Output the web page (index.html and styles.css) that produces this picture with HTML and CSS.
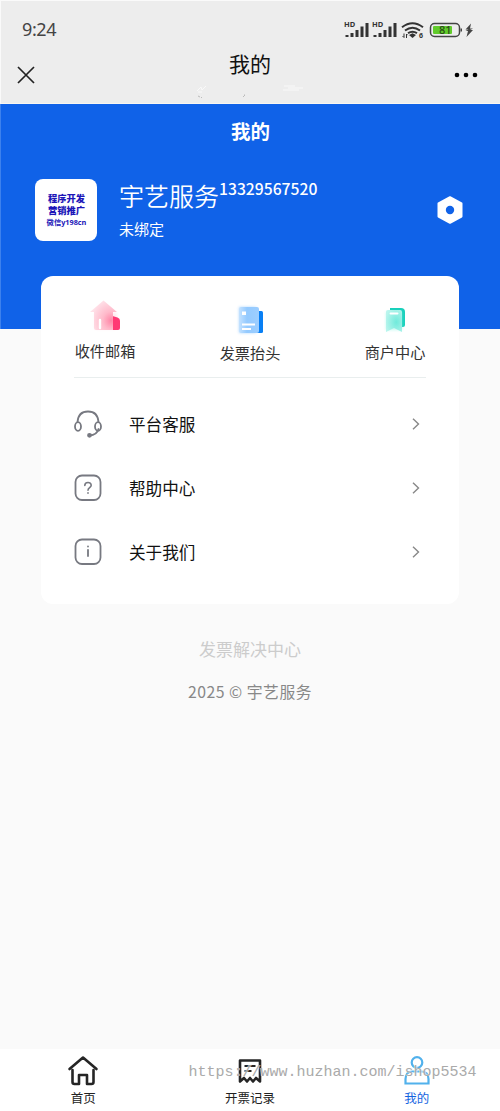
FILE: index.html
```html
<!DOCTYPE html>
<html lang="zh-CN">
<head>
<meta charset="utf-8">
<title>我的</title>
<link rel="stylesheet" href="styles.css">
</head>
<body>
<div class="screen">
  <header class="system">
    <div class="status">
      <span class="time">9:24</span>
      <svg class="status-icons" width="132" height="20" viewBox="0 0 132 20">
        <g fill="#333">
          <text x="0" y="7" class="hd">HD</text>
          <path d="M1.500 15h3v2h-3zM6.500 13h3v4h-3zM11.500 10h3v7h-3zM16.500 6.500h3V17h-3zM21.500 3h3v14h-3z"/>
          <text x="28" y="7" class="hd">HD</text>
          <path d="M29.500 15h3v2h-3zM34.500 13h3v4h-3zM39.500 10h3v7h-3zM44.500 6.500h3V17h-3zM49.500 3h3v14h-3z"/>
          <path d="M65 15l3.500-1.700L72 15l-3.500 3z"/>
          <text x="75" y="18" class="six">6</text>
        </g>
        <path d="M58 7.200q10.500-8 21 0M61 10.500q7.500-5.500 15 0M64 13.200q4.500-2.800 9 0" fill="none" stroke="#333" stroke-width="2"/>
        <path d="M60 13.500v4l-1.500-1.500M62.500 18v-4l1.200 1.200" fill="none" stroke="#333" stroke-width="1"/>
        <rect x="86.500" y="3.500" width="29" height="13" rx="4" fill="none" stroke="#444" stroke-width="1.500"/>
        <rect x="89" y="6" width="19" height="8" rx="1" fill="#61cb2b"/>
        <path d="M116.500 8.500h1.500v3h-1.500z" fill="#444"/>
        <text x="95" y="14" class="level">81</text>
        <path d="M127 3.500l-5.500 6h3l-3 1.500h2.500l-1.500 6 6.500-7h-3l3-1.500h-3z" fill="#444"/>
      </svg>
    </div>
    <div class="nav">
      <svg width="18" height="18" viewBox="0 0 18 18"><path d="M1 1l16 16M17 1L1 17" stroke="#222" stroke-width="1.700"/></svg>
      <h1>我的</h1>
      <svg width="24" height="6" viewBox="0 0 24 6"><circle cx="3" cy="3" r="2.300"/><circle cx="12" cy="3" r="2.300"/><circle cx="21" cy="3" r="2.300"/></svg>
    </div>
    <svg class="specks" width="108" height="15" viewBox="0 0 108 15" fill="none"><path d="M1 7l4-4 1 3 4-4M2 8h4M88 2h11M92 4h15M87 6h16" stroke="#f9f9f9"/><path d="M2 12l2 1M5 13l1 1M47 13l2-2M48 11h1" stroke="#bbb"/></svg>
  </header>

  <section class="hero">
    <h2>我的</h2>
    <div class="profile">
      <div class="avatar"><b>程序开发</b><b>营销推广</b><b class="wechat">微信y198cn</b></div>
      <div class="who">
        <div class="name">宇艺服务<span class="phone">13329567520</span></div>
        <div class="bind">未绑定</div>
      </div>
      <svg class="settings" width="28" height="30" viewBox="0 0 28 30"><path d="M14 2.200L25.500 8.500v13L14 27.800 2.500 21.500v-13z" fill="#fff" stroke="#fff" stroke-width="2" stroke-linejoin="round"/><circle cx="14" cy="15" r="4.200" fill="#1062e8"/></svg>
    </div>
  </section>

  <main class="card">
    <div class="quick">
      <div class="quick-item mail">
        <svg width="36" height="36" viewBox="0 0 36 36">
          <defs><radialGradient id="pink" cx=".78" cy=".68" r=".75"><stop offset="0" stop-color="#ff86a7"/><stop offset=".4" stop-color="#ffb9ca"/><stop offset="1" stop-color="#ffe2e9"/></radialGradient><filter id="soft" x="-30%" y="-30%" width="160%" height="160%"><feGaussianBlur stdDeviation="1.800"/></filter></defs>
          <path d="M7 15h22v16H7z" fill="#ffdce5" filter="url(#soft)" opacity=".6"/>
          <path d="M24.500 18l5 1.500q2.500 1 2.500 3V30q0 2-2 2h-5.500z" fill="#ff3974"/>
          <path d="M15.500 2.500L29 14h-4v18H8q-2 0-2-2V14H2z" fill="url(#pink)"/>
          <path d="M12 22v8" stroke="#fff" stroke-width="2.400" stroke-linecap="round"/>
        </svg><span>收件邮箱</span>
      </div>
      <div class="quick-item title">
        <svg width="32" height="36" viewBox="0 0 32 36">
          <defs><linearGradient id="blue"><stop offset="0" stop-color="#c4e2ff"/><stop offset=".4" stop-color="#94caff"/><stop offset="1" stop-color="#9dceff"/></linearGradient></defs>
          <path d="M5 6h17v26H5z" fill="#8bc6ff" filter="url(#soft)" opacity=".65"/>
          <rect x="21" y="10" width="8" height="22" rx="1.500" fill="#087ff4"/>
          <rect x="5" y="6" width="20" height="26" rx="2" fill="url(#blue)"/>
          <path d="M8 23.500h13M8 28h9" stroke="#fff" stroke-width="2"/><path d="M8 10.500h4v3.500H8z" fill="#fff"/>
        </svg><span>发票抬头</span>
      </div>
      <div class="quick-item merchant">
        <svg width="30" height="32" viewBox="0 0 30 32">
          <defs><radialGradient id="green" cx=".65" cy=".55" r=".7"><stop offset="0" stop-color="#70eadb"/><stop offset="1" stop-color="#b9f5ed"/></radialGradient></defs>
          <path d="M10 4h11q4 0 4 4v13q0 2-2 2H10z" fill="#18d0bb"/>
          <path d="M6 8h16v18H6z" fill="#8df0e3" filter="url(#soft)" opacity=".5"/>
          <path d="M8 6h12q2 0 2 2v20l-8-4-8 4V8q0-2 2-2z" fill="url(#green)"/>
          <path d="M10.500 9.500h7" stroke="#fff" stroke-width="2" stroke-linecap="round"/>
        </svg><span>商户中心</span>
      </div>
    </div>
    <nav class="menu">
      <div class="row">
        <svg class="lead" viewBox="0 0 28 28"><path d="M3.500 12C4 5 8 1.500 14 1.500S24 5 24.500 12M24.500 19Q23 25 15.500 25.500"/><ellipse cx="4" cy="16.500" rx="3" ry="4.300"/><ellipse cx="24" cy="16.500" rx="3" ry="4.300"/><circle cx="15.500" cy="25.300" r="1.500" fill="#777981"/></svg>
        <span>平台客服</span><svg class="arrow" viewBox="0 0 8 12"><path d="M1 .7l5.500 5.300L1 11.300"/></svg>
      </div>
      <div class="row">
        <svg class="lead" viewBox="0 0 28 28"><rect x="1.500" y="1.500" width="25" height="24.500" rx="6.500"/><path d="M10.800 11.500C10.800 7.500 17.200 7.500 17.200 11.300c0 2.400-3.200 2.400-3.200 5M14 18.800v.5" stroke-width="1.600"/></svg>
        <span>帮助中心</span><svg class="arrow" viewBox="0 0 8 12"><path d="M1 .7l5.500 5.300L1 11.300"/></svg>
      </div>
      <div class="row">
        <svg class="lead" viewBox="0 0 28 28"><rect x="1.500" y="1.500" width="25" height="24.500" rx="6.500"/><path d="M14 11.800v6.200M14 8.300v.2"/></svg>
        <span>关于我们</span><svg class="arrow" viewBox="0 0 8 12"><path d="M1 .7l5.500 5.300L1 11.300"/></svg>
      </div>
    </nav>
  </main>

  <footer class="copyright"><div class="brand">发票解决中心</div><div class="year">2025 © 宇艺服务</div></footer>

  <nav class="tabs">
    <div class="tab"><svg viewBox="0 0 32 32"><path d="M2.500 14L16 2.500 29.500 14M5.500 15v12q0 2 2 2H12V20h8v9h4.500q2 0 2-2V15" fill="none" stroke="#252525" stroke-width="2.600" stroke-linecap="round" stroke-linejoin="round"/></svg><span>首页</span></div>
    <div class="tab"><svg viewBox="0 0 32 32"><path d="M6 5.500h20v21l-4-3.500-3 3.500-3-3.500-3 3.500-3-3.500-4 3.500z" fill="none" stroke="#252525" stroke-width="2.600" stroke-linejoin="round"/><path d="M10.500 11h11M10.500 16h7" stroke="#252525" stroke-width="2.200"/></svg><span>开票记录</span></div>
    <div class="tab active"><svg viewBox="0 0 32 32"><circle cx="16" cy="7.500" r="5.300" fill="none" stroke="#51b1ec" stroke-width="2.200"/><path d="M4.500 28.500V24c0-5 3-7.500 7-7.500h9c4 0 7 2.500 7 7.500v4.500z" fill="none" stroke="#51b1ec" stroke-width="2.200"/></svg><span>我的</span></div>
    <div class="watermark">https://www.huzhan.com/ishop5534</div>
  </nav>
</div>
</body>
</html>
```
FILE: styles.css
```css
* { box-sizing: border-box; }
body { margin: 0; font-family: "Noto Sans CJK SC", sans-serif; color: #222; }
svg { display: block; flex: none; }
h1, h2 { margin: 0; }
.screen { width: 500px; height: 1111px; display: flex; flex-direction: column; background: #fafafa; overflow: hidden; }
.system { position: relative; height: 104px; background: #ededed; border-top: 1px solid #fafafa; border-left: 1px solid #fafafa; border-bottom: 1px solid #f8f6f2; }
.specks { position: absolute; left: 195px; top: 83px; }
.status { height: 42px; padding: 17px 24.500px 0 21px; display: flex; justify-content: space-between; }
.time { font: 18px/22px "Noto Sans", sans-serif; color: #444; letter-spacing: -.4px; }
.status-icons { margin-top: 2px; }
.hd { font: bold 7.500px "Noto Sans", sans-serif; }
.six { font: bold 7px "Noto Sans", sans-serif; }
.level { font: 500 11px "Noto Sans", sans-serif; fill: #294c18; }
.nav { padding: 5px 22px 0 15px; display: grid; grid-template-columns: 60px 1fr 60px; }
.nav h1 { font-size: 21px; line-height: 30px; font-weight: 400; color: #111; text-align: center; transform: translateX(3px); }
.nav svg:first-child { margin: 18px 0 0 1px; }
.nav svg:last-child { margin-top: 24px; justify-self: end; }
.hero { height: 225px; background: #1062e8; color: #fff; border-left: 1px solid #3d81ed; }
.hero h2 { padding-top: 12px; font-size: 19.500px; line-height: 30px; text-align: center; font-weight: 700; }
.profile { display: flex; margin: 33px 36px 0 34px; }
.avatar { width: 62px; height: 62px; border-radius: 8px; background: #fff; color: #1c16b8; display: flex; flex-direction: column; align-items: center; padding: 13px 0 0 1px; font-size: 9.300px; line-height: 12px; white-space: nowrap; }
.avatar b { font-weight: 900; }
.avatar .wechat { font: 700 7.300px/12px "Open Sans", "Noto Sans CJK SC", sans-serif; }
.who { margin-left: 22px; flex: 1; }
.name { display: flex; font-size: 25px; line-height: 32px; height: 32px; font-weight: 350; white-space: nowrap; }
.phone { font-size: 15.700px; line-height: 19px; font-weight: 500; }
.bind { margin-top: 7px; font-size: 15px; line-height: 22px; }
.settings { margin-top: 16px; }
.card { width: 418px; height: 328px; margin: -53px 0 0 41px; padding: 0 33px; background: #fff; border-radius: 12px; }
.quick { height: 102px; display: flex; justify-content: space-between; border-bottom: 1px solid #e9eeee; }
.quick-item { width: 62px; display: flex; flex-direction: column; align-items: center; font-size: 15.200px; line-height: 22px; color: #333; white-space: nowrap; }
.mail svg { transform: translateX(1px); }
.mail { padding-top: 22px; }
.mail span { margin-top: 5px; }
.title { padding-top: 25px; }
.title span { margin-top: 4px; }
.merchant { padding-top: 28px; }
.merchant span { margin-top: 4px; }
.menu { padding-top: 14px; }
.row { height: 64px; display: flex; align-items: center; padding-right: 6px; font-size: 16.600px; line-height: 24px; color: #111; }
.row span { margin: 0 0 1px 27px; flex: 1; }
.lead { width: 28px; height: 28px; fill: none; stroke: #777981; stroke-width: 1.800; stroke-linecap: round; }
.arrow { width: 8px; height: 12px; fill: none; stroke: #888; stroke-width: 1.400; }
.copyright { padding-top: 33px; text-align: center; }
.brand { font-size: 17px; line-height: 24px; color: #ccc; }
.year { margin-top: 19px; font-size: 15.800px; line-height: 24px; letter-spacing: .5px; color: #888; }
.tabs { position: relative; margin-top: auto; height: 62px; background: #fff; display: grid; grid-template-columns: repeat(3, 1fr); }
.tab { display: flex; flex-direction: column; align-items: center; padding-top: 6px; font-size: 12.500px; line-height: 18px; color: #222; }
.tab svg { width: 32px; height: 32px; margin-bottom: 2px; }
.active { color: #1464df; }
.watermark { position: absolute; left: 188.500px; top: 14px; font: 15px/20px "Liberation Mono", monospace; color: #aaa; text-shadow: 1px 0 rgba(255,255,255,.6), -1px 0 rgba(255,255,255,.6); white-space: nowrap; }
```
